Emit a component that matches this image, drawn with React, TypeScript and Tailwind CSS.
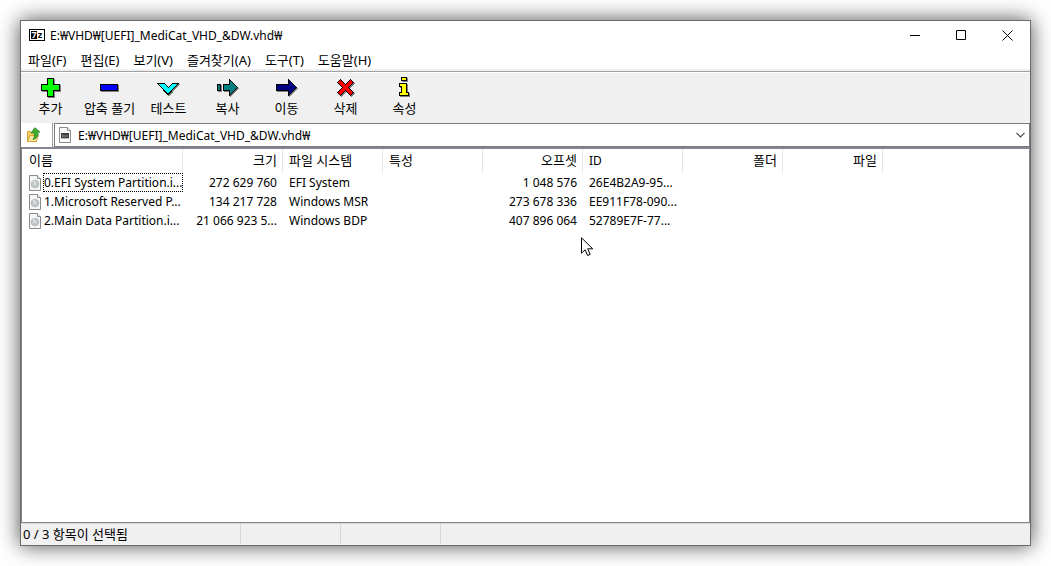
import type { ReactNode } from "react";

const menus = ["파일(F)", "편집(E)", "보기(V)", "즐겨찾기(A)", "도구(T)", "도움말(H)"];

const path = "E:₩VHD₩[UEFI]_MediCat_VHD_&DW.vhd₩";

// crispEdges keeps the toolbar icons pixelated like small bitmaps
const ToolIcon = ({ shadow, children }: { shadow: string; children: ReactNode }) => (
  <svg width="25" height="24" viewBox="0 0 25 24" shapeRendering="crispEdges" aria-hidden="true">
    <path d={shadow} fill="#808080" stroke="#808080" transform="translate(1 1)" />
    {children}
  </svg>
);

const PLUS = "M9.5 2.5h6v6h6v6h-6v6h-6v-6h-6v-6h6z";
const MINUS = "M3.5 8.5h17v6h-17z";
const CHECK = "M1.5 7.5h7l4 4l4-4h6l-10.5 11z";
const COPY = "M2.5 8.5h3v6h-3zM8.5 8.5h6v-5l8 8l-8 8v-5h-6z";
const MOVE = "M2.5 8.5h12v-5l8 8l-8 8v-5h-12z";
const CROSS = "M4.5 6.5l3-3l5 5l5-5l3 3l-5 5l5 5l-3 3l-5-5l-5 5l-3-3l5-5z";
const INFO = "M9.5 1.5h5v3h-5zM7.5 7.5h7v9h2v3h-9v-3h2v-6h-2z";

const tools = [
  { label: "추가", d: PLUS, fill: "#00ff00" },
  { label: "압축 풀기", d: MINUS, fill: "#0000ff" },
  { label: "테스트", d: CHECK, fill: "#00ffff" },
  { label: "복사", d: COPY, fill: "#008080" },
  { label: "이동", d: MOVE, fill: "#000080" },
  { label: "삭제", d: CROSS, fill: "#ff0000" },
  { label: "속성", d: INFO, fill: "#ffff00" },
];

const columns = [
  { label: "이름", right: false },
  { label: "크기", right: true },
  { label: "파일 시스템", right: false },
  { label: "특성", right: false },
  { label: "오프셋", right: true },
  { label: "ID", right: false },
  { label: "폴더", right: true },
  { label: "파일", right: true },
];

const rows = [
  { name: "0.EFI System Partition.i...", size: "272 629 760", fs: "EFI System", offset: "1 048 576", id: "26E4B2A9-95..." },
  { name: "1.Microsoft Reserved P...", size: "134 217 728", fs: "Windows MSR", offset: "273 678 336", id: "EE911F78-090..." },
  { name: "2.Main Data Partition.i...", size: "21 066 923 5...", fs: "Windows BDP", offset: "407 896 064", id: "52789E7F-77..." },
];

const AppIcon = () => (
  <span className="flex h-3 w-4 border border-black bg-white p-px text-[9px] leading-[8px] font-bold" aria-hidden="true">
    <span className="flex-1 bg-black text-center text-white">7</span>
    <span className="flex-1 text-center text-black">z</span>
  </span>
);

const DiscImageIcon = () => (
  <svg width="12" height="16" viewBox="0 0 12 16" className="shrink-0" aria-hidden="true">
    <path d="M.5.5h8l3 3v12H.5z" fill="#f7f7f7" stroke="#8a8a8a" />
    <path d="M8.5.5v3h3" fill="#fff" stroke="#8a8a8a" />
    <circle cx="6" cy="9" r="3.8" fill="#c3c8ca" stroke="#a4a8aa" strokeWidth=".7" />
    <path d="M6 9L3.2 6.6A3.6 3.6 0 0 1 6 5.4z" fill="#dcdfe0" />
    <circle cx="6" cy="9" r="1" fill="#e8eaea" />
  </svg>
);

const DriveFileIcon = () => (
  <svg width="12" height="16" viewBox="0 0 12 16" aria-hidden="true">
    <path d="M.5.5h8l3 3v12H.5z" fill="#fafafa" stroke="#8a8a8a" />
    <path d="M8.5.5v3h3" fill="#fff" stroke="#8a8a8a" />
    <path d="M2 6h8v5H2z" fill="#3c4145" />
    <path d="M3 9h1.5M5.5 9h1M7.5 9h1" stroke="#d6dadd" />
    <path d="M2 11.5h8" stroke="#b5b9bc" />
  </svg>
);

const UpFolderIcon = () => (
  <svg width="16" height="16" viewBox="0 0 16 16" aria-hidden="true">
    <path d="M1.5 4.5h3l1 1h5v9h-9z" fill="#f3cf63" stroke="#d3a437" />
    <path d="M1.5 14.5l2.5-6h8.5l-2.5 6z" fill="#fde99a" stroke="#d3a437" />
    <path d="M7 12.5c1.5-2 1.7-4 1.4-6.5H5L8.8.8L14 5h-2c.5 3.5-1 6.5-5 7.5z" fill="#3fae2f" stroke="#23801c" strokeWidth=".8" />
  </svg>
);

export default function App() {
  return (
    <div className="flex min-h-screen bg-white p-5 font-['Noto_Sans','Noto_Sans_CJK_KR',sans-serif] text-[12px] leading-4 text-black">
      <div className="flex min-w-0 flex-1 flex-col border border-[#6b6b6b] bg-white shadow-[0_0_20px_0_rgba(0,0,0,0.7)]">
        {/* Title bar */}
        <header className="flex h-7 items-center pl-2">
          <AppIcon />
          <h1 className="ml-[5px] flex-1 truncate pt-px">{path}</h1>
          <button aria-label="최소화" className="flex h-7 w-[46px] items-center justify-center">
            <svg width="11" height="11" viewBox="0 0 11 11"><path d="M0 5.5h10" stroke="#000" /></svg>
          </button>
          <button aria-label="최대화" className="flex h-7 w-[46px] items-center justify-center">
            <svg width="11" height="11" viewBox="0 0 11 11"><path d="M.5.5h9v9h-9z" fill="none" stroke="#000" /></svg>
          </button>
          <button aria-label="닫기" className="flex h-7 w-[46px] items-center justify-center">
            <svg width="11" height="11" viewBox="0 0 11 11"><path d="M.5.5l10 10M10.5.5l-10 10" stroke="#000" /></svg>
          </button>
        </header>

        {/* Menu */}
        <nav className="flex h-5 items-end gap-[2px] pb-px pl-px text-[13px]">
          {menus.map((m) => (
            <button key={m} className="px-[6px] whitespace-nowrap">{m}</button>
          ))}
        </nav>

        {/* Toolbar */}
        <div className="flex h-[54px] shrink-0 border-t-2 border-[#f0f0f0] bg-[#f0f0f0]">
          <div className="flex flex-1 border-t border-[#a0a0a0]">
            <div className="flex flex-1 border-t border-white pt-[3px]">
              {tools.map((t) => (
                <button key={t.label} className="flex w-[59px] flex-col items-center text-[13px] whitespace-nowrap">
                  <ToolIcon shadow={t.d}>
                    <path d={t.d} fill={t.fill} stroke="#000" />
                  </ToolIcon>
                  <span>{t.label}</span>
                </button>
              ))}
            </div>
          </div>
        </div>

        {/* Address bar */}
        <div className="flex h-6 shrink-0">
          <button aria-label="상위 폴더" className="mr-px flex w-8 items-center border-r border-[#a0a0a0] pl-[5px]">
            <UpFolderIcon />
          </button>
          <div className="relative flex flex-1 items-center border border-[#7a7a7a] bg-white">
            <span className="absolute left-1"><DriveFileIcon /></span>
            <select aria-label="주소" className="h-full w-full appearance-none bg-transparent pt-px pl-[23px] outline-none">
              <option>{path}</option>
            </select>
            <svg className="pointer-events-none absolute right-1" width="9" height="6" viewBox="0 0 9 6" aria-hidden="true">
              <path d="M.5.8l4 4l4-4" fill="none" stroke="#444" strokeWidth="1.2" />
            </svg>
          </div>
        </div>

        {/* File list */}
        <main className="relative flex-1 overflow-hidden border border-t-2 border-[#828790] bg-white">
          <table className="w-full table-fixed border-collapse">
            <colgroup>
              <col className="w-[161px]" />
              {columns.slice(1).map((c) => (
                <col key={c.label} className="w-[100px]" />
              ))}
              <col />
            </colgroup>
            <thead>
              <tr className="h-6">
                {columns.map((c) => (
                  <th
                    key={c.label}
                    scope="col"
                    className={`p-0 font-normal ${c.right ? "text-right" : "text-left"}`}
                  >
                    <div
                      className={`h-6 border-r border-[#e5e5e5] leading-[23px] ${
                        c.right ? "pr-[5px]" : c.label === "이름" ? "pl-[7px]" : "pl-[6px]"
                      } ${c.label === "ID" ? "text-[12px]" : "text-[13px]"}`}
                    >
                      {c.label}
                    </div>
                  </th>
                ))}
                <td />
              </tr>
            </thead>
            <tbody className="whitespace-nowrap">
              {rows.map((r, i) => (
                <tr key={r.name} className="h-[19px]">
                  <td className="p-0">
                    <div className="flex h-[19px] items-center pl-[7px]">
                      <DiscImageIcon />
                      <span
                        className={`ml-[2px] flex h-[19px] flex-1 items-center overflow-hidden border border-dotted ${
                          i === 0 ? "border-black" : "border-transparent"
                        }`}
                      >
                        {r.name}
                      </span>
                    </div>
                  </td>
                  <td className="px-[6px] py-0 text-right">{r.size}</td>
                  <td className="px-[6px] py-0">{r.fs}</td>
                  <td />
                  <td className="px-[6px] py-0 text-right">{r.offset}</td>
                  <td className="px-[6px] py-0">{r.id}</td>
                  <td />
                  <td />
                  <td />
                </tr>
              ))}
            </tbody>
          </table>
          {/* Mouse pointer */}
          <svg className="absolute top-[88px] left-[559px]" width="13" height="20" viewBox="0 0 13 20" aria-hidden="true">
            <path d="M.5.8v15.4l3.6-3.4l2.5 5.7l2.6-1.1l-2.5-5.6h5z" fill="#fff" stroke="#000" />
          </svg>
        </main>

        {/* Status bar */}
        <footer className="flex h-[22px] shrink-0 border-t border-[#d7d7d7] bg-[#f0f0f0] text-[13px] leading-[21px]">
          <div className="mb-px w-[220px] border-r border-[#d7d7d7] pl-[2px]">0 / 3 항목이 선택됨</div>
          <div className="mb-px w-[100px] border-r border-[#d7d7d7]" />
          <div className="mb-px w-[100px] border-r border-[#d7d7d7]" />
          <div className="flex-1" />
        </footer>
      </div>
    </div>
  );
}
